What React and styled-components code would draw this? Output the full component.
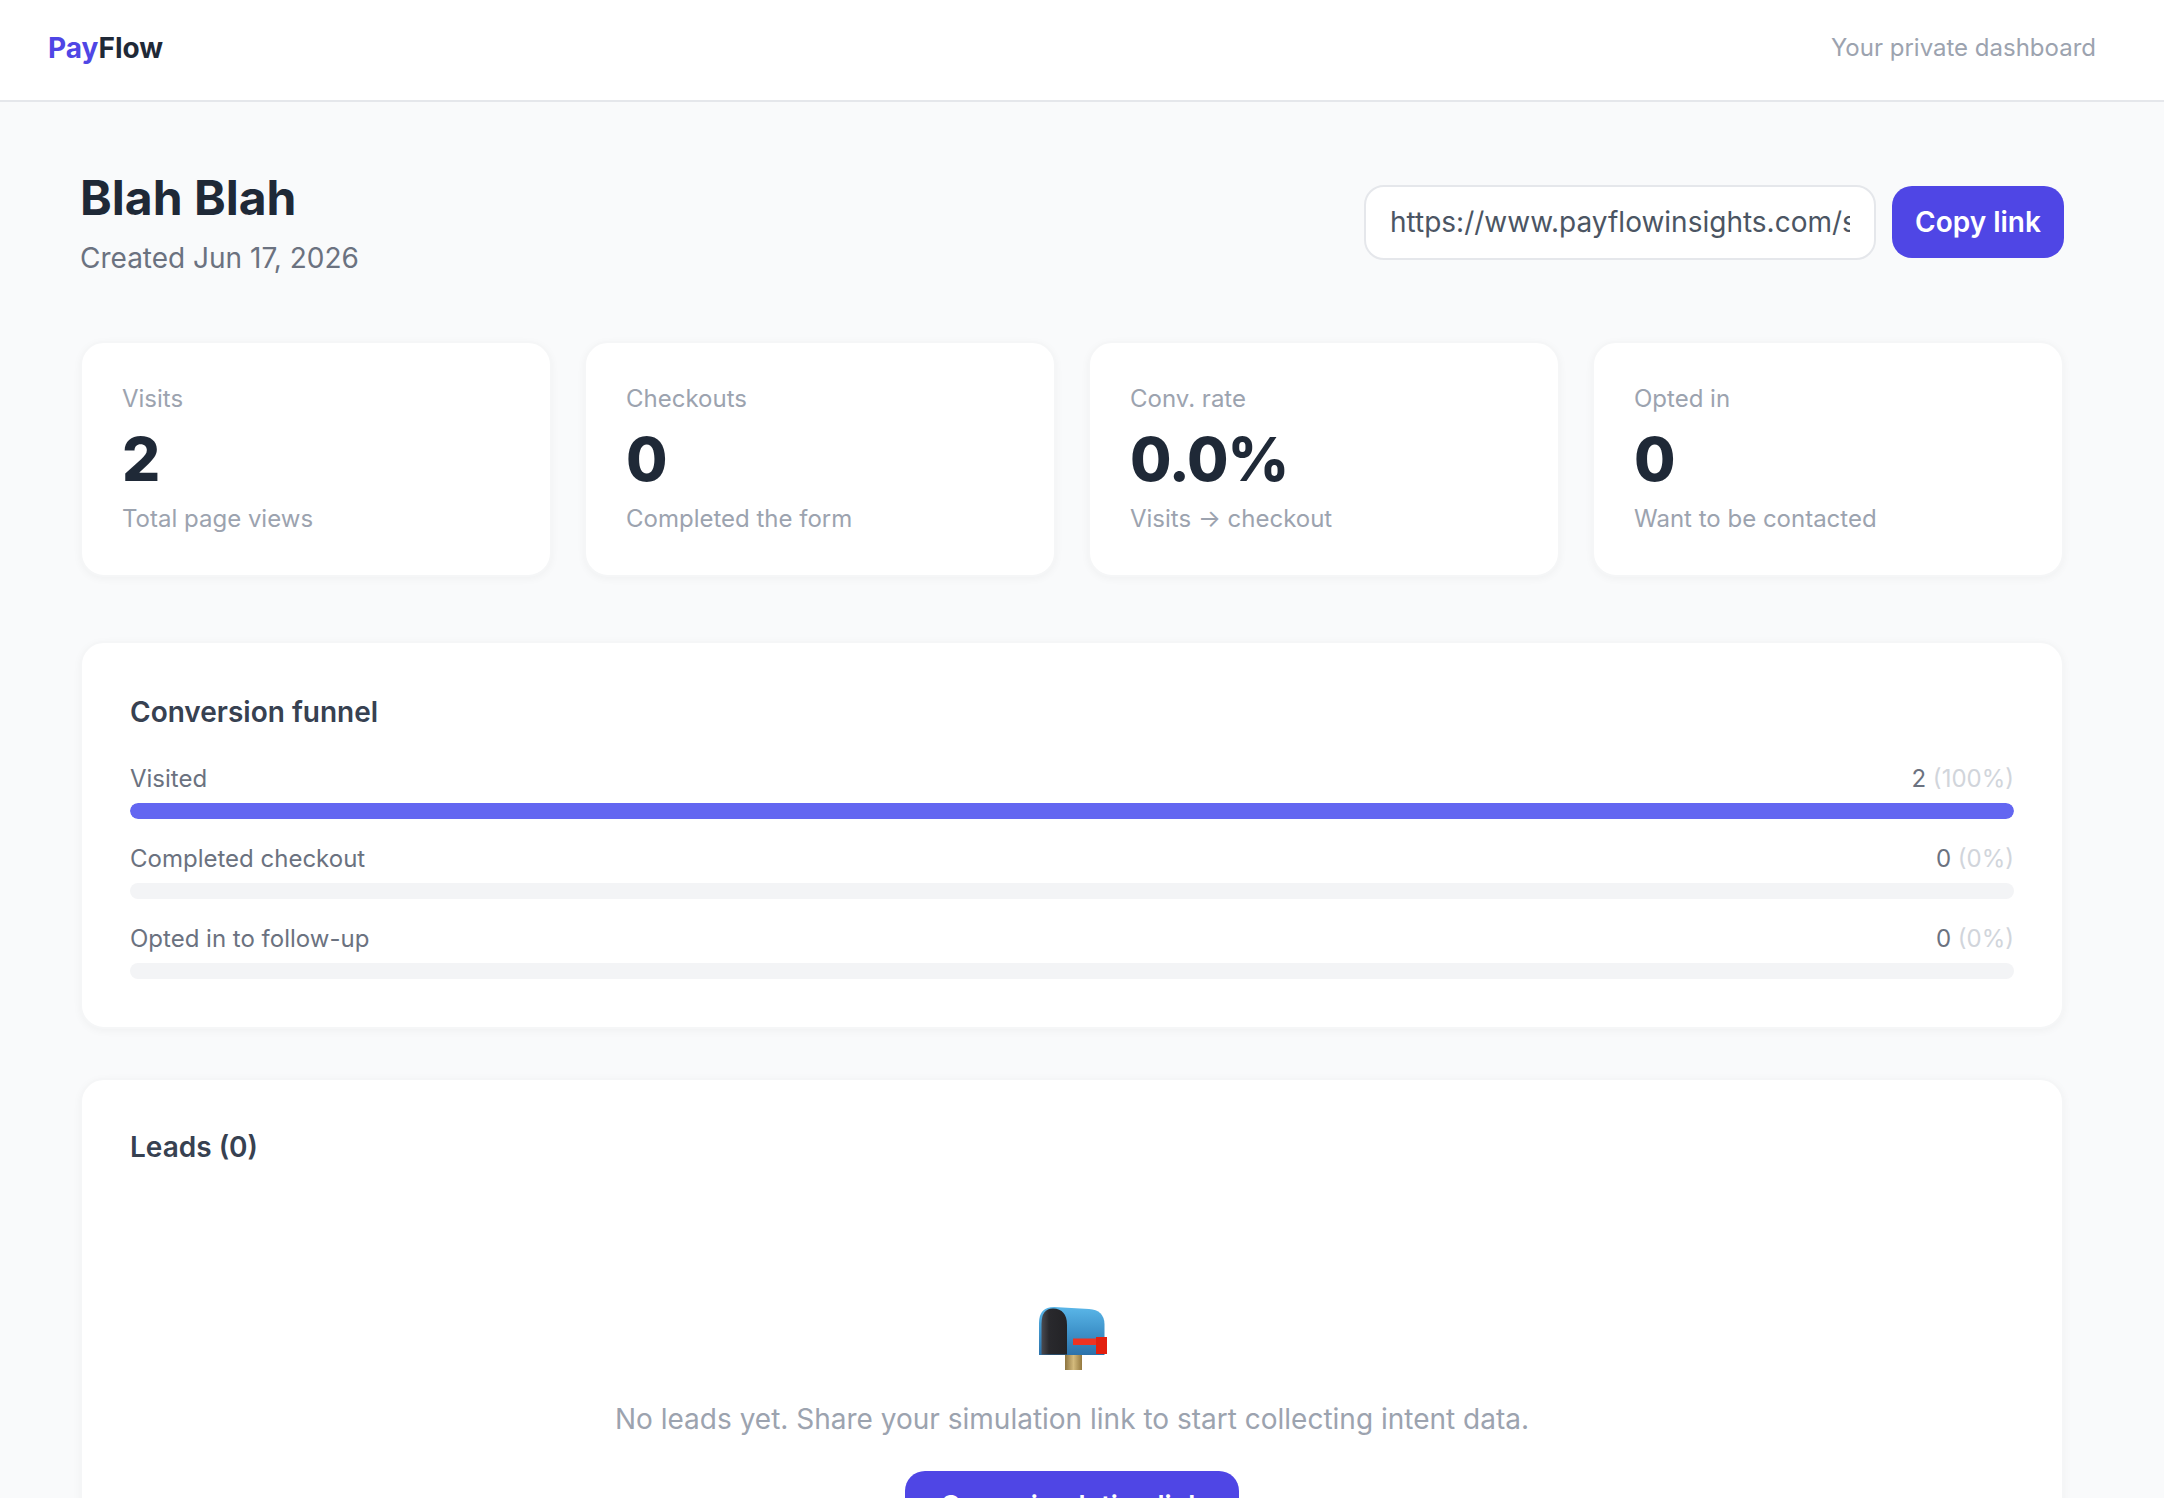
import React from "react";
import styled, { createGlobalStyle } from "styled-components";

const GlobalStyle = createGlobalStyle`
  html, body {
    margin: 0;
    height: 100%;
    overflow: hidden;
    background: #f9fafb;
    font-family: Inter, "Noto Sans", sans-serif;
    color: #1f2937;
  }
  * {
    box-sizing: border-box;
  }
`;

const stats = [
  { label: "Visits", value: "2", note: "Total page views" },
  { label: "Checkouts", value: "0", note: "Completed the form" },
  { label: "Conv. rate", value: "0.0%", note: "Visits → checkout" },
  { label: "Opted in", value: "0", note: "Want to be contacted" },
];

const funnel = [
  { label: "Visited", count: 2, percent: 100 },
  { label: "Completed checkout", count: 0, percent: 0 },
  { label: "Opted in to follow-up", count: 0, percent: 0 },
];

function MailboxIcon() {
  return (
    <MailSvg viewBox="0 0 70 63">
      <defs>
        <linearGradient id="mailBody" x1="0" y1="0" x2="0" y2="1">
          <stop offset="0" stopColor="#5ab6e8" />
          <stop offset="0.5" stopColor="#3f94cb" />
          <stop offset="1" stopColor="#2c72aa" />
        </linearGradient>
        <linearGradient id="mailDoor" x1="0" y1="0" x2="1" y2="0">
          <stop offset="0" stopColor="#4a4a50" />
          <stop offset="0.3" stopColor="#29292d" />
          <stop offset="1" stopColor="#232326" />
        </linearGradient>
        <linearGradient id="mailPost" x1="0" y1="0" x2="1" y2="0">
          <stop offset="0" stopColor="#8d7440" />
          <stop offset="0.5" stopColor="#d3ba7c" />
          <stop offset="1" stopColor="#94793f" />
        </linearGradient>
      </defs>
      <rect x="26" y="47" width="17" height="16" fill="url(#mailPost)" />
      <path d="M0 48V16Q0 0 15 0L50 2Q65 3 65.5 17V48Z" fill="url(#mailBody)" />
      <path d="M2.5 47.5V17Q2.5 1.5 14 1.5Q28 2 28 18V47.5Z" fill="url(#mailDoor)" />
      <path d="M34 31.5H58V38H34Z" fill="#ee3322" />
      <path d="M57 30H68V47H57Z" fill="#e3200f" />
    </MailSvg>
  );
}

function App() {
  return (
    <Page>
      <GlobalStyle />
      <Navbar>
        <Logo>
          <span>Pay</span>Flow
        </Logo>
        <NavNote>Your private dashboard</NavNote>
      </Navbar>

      <Main>
        <Header>
          <div>
            <Title>Blah Blah</Title>
            <Created>Created Jun 17, 2026</Created>
          </div>
          <ShareRow>
            <LinkInput readOnly value="https://www.payflowinsights.com/s/blah-blah" />
            <CopyButton>Copy link</CopyButton>
          </ShareRow>
        </Header>

        <StatGrid>
          {stats.map((s) => (
            <StatCard key={s.label}>
              <StatLabel>{s.label}</StatLabel>
              <StatValue>{s.value}</StatValue>
              <StatNote>{s.note}</StatNote>
            </StatCard>
          ))}
        </StatGrid>

        <FunnelCard>
          <CardTitle>Conversion funnel</CardTitle>
          {funnel.map((row) => (
            <FunnelRow key={row.label}>
              <RowText>
                <span>{row.label}</span>
                <span>
                  {row.count} <Percent>({row.percent}%)</Percent>
                </span>
              </RowText>
              <Track>
                <Fill style={{ width: `${row.percent}%` }} />
              </Track>
            </FunnelRow>
          ))}
        </FunnelCard>

        <LeadsCard>
          <CardTitle>Leads (0)</CardTitle>
          <EmptyState>
            <MailboxIcon />
            <EmptyText>
              No leads yet. Share your simulation link to start collecting intent data.
            </EmptyText>
            <EmptyButton>Copy simulation link</EmptyButton>
          </EmptyState>
        </LeadsCard>
      </Main>
    </Page>
  );
}

const Page = styled.div`
  height: 100vh;
  overflow: hidden;
`;
const Navbar = styled.header`
  height: 102px;
  display: flex;
  align-items: center;
  justify-content: space-between;
  padding: 0 68px 4px 48px;
  background: #fff;
  border-bottom: 2px solid #e5e7eb;
`;
const Logo = styled.div`
  font-size: 28px;
  font-weight: 700;
  color: #1f2937;
  span {
    color: #4f46e5;
  }
`;
const NavNote = styled.div`
  padding-bottom: 2px;
  font-size: 24px;
  color: #9ca3af;
`;
const Main = styled.main`
  padding: 67px 100px 0 80px;
`;
const Header = styled.div`
  display: flex;
  align-items: center;
  justify-content: space-between;
  margin-bottom: 66px;
`;
const Title = styled.h1`
  margin: 0 0 14px;
  font-size: 48px;
  line-height: 58px;
  font-weight: 700;
  color: #1f2937;
`;
const Created = styled.div`
  font-size: 28px;
  line-height: 34px;
  color: #6b7280;
`;
const ShareRow = styled.div`
  display: flex;
  align-items: center;
  gap: 16px;
`;
const LinkInput = styled.input`
  width: 512px;
  height: 75px;
  padding: 0 24px;
  border: 2px solid #e5e7eb;
  border-radius: 20px;
  background: #fff;
  font-family: inherit;
  font-size: 28px;
  color: #4b5563;
  outline: none;
`;
const CopyButton = styled.button`
  width: 172px;
  height: 72px;
  border: none;
  border-radius: 20px;
  background: #4f46e5;
  color: #fff;
  font-family: inherit;
  font-size: 28px;
  font-weight: 600;
`;
const StatGrid = styled.div`
  display: grid;
  grid-template-columns: repeat(4, 1fr);
  gap: 32px;
  margin-bottom: 64px;
`;
const Card = styled.section`
  background: #fff;
  border: 2px solid #f5f6f7;
  border-radius: 24px;
  box-shadow: 0 2px 8px rgba(0, 0, 0, 0.04);
`;
const StatCard = styled(Card)`
  height: 236px;
  padding: 40px;
`;
const StatLabel = styled.div`
  font-size: 24px;
  line-height: 32px;
  color: #9ca3af;
`;
const StatValue = styled.div`
  margin-top: 8px;
  font-size: 60px;
  line-height: 72px;
  font-weight: 800;
  letter-spacing: -1px;
  color: #1f2937;
`;
const StatNote = styled.div`
  margin-top: 8px;
  font-size: 24px;
  line-height: 32px;
  color: #9ca3af;
`;
const FunnelCard = styled(Card)`
  padding: 52px 48px 48px;
  margin-bottom: 49px;
`;
const LeadsCard = styled(Card)`
  padding: 50px 48px 48px;
`;
const CardTitle = styled.h2`
  margin: 0 0 34px;
  font-size: 28px;
  line-height: 34px;
  font-weight: 600;
  color: #374151;
`;
const FunnelRow = styled.div`
  margin-bottom: 24px;
  &:last-child {
    margin-bottom: 0;
  }
`;
const RowText = styled.div`
  display: flex;
  justify-content: space-between;
  margin-bottom: 8px;
  font-size: 24px;
  line-height: 32px;
  color: #6b7280;
`;
const Percent = styled.span`
  color: #d1d5db;
`;
const Track = styled.div`
  height: 16px;
  border-radius: 8px;
  background: #f3f4f6;
  overflow: hidden;
`;
const Fill = styled.div`
  height: 100%;
  border-radius: 8px;
  background: #6366f1;
`;
const EmptyState = styled.div`
  display: flex;
  flex-direction: column;
  align-items: center;
  padding-top: 109px;
`;
const MailSvg = styled.svg`
  width: 70px;
  height: 63px;
  margin-left: 4px;
`;
const EmptyText = styled.p`
  margin: 32px 0 35px;
  font-size: 28px;
  line-height: 34px;
  color: #9ca3af;
`;
const EmptyButton = styled.button`
  width: 334px;
  height: 68px;
  border: none;
  border-radius: 20px;
  background: #4f46e5;
  color: #fff;
  font-family: inherit;
  font-size: 27px;
  font-weight: 600;
`;

export default App;
